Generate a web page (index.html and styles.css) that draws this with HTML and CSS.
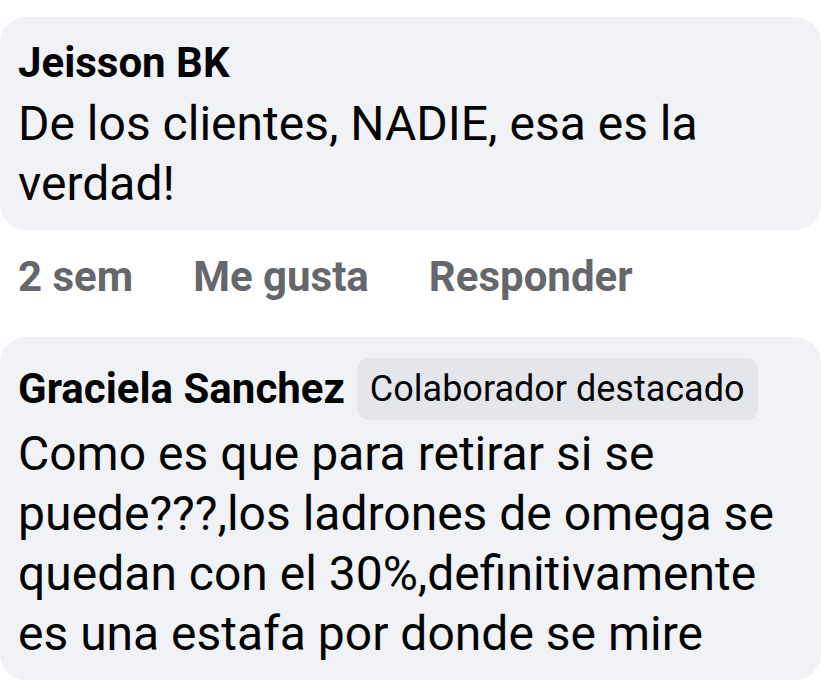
FILE: index.html
```html
<!DOCTYPE html>
<html lang='es'>
<head>
  <title>Comentarios</title>

  <meta charset='utf-8'>
  <meta name='description' content='Comentarios'>

  <link rel="stylesheet" href="styles.css">
</head>
<body>
  <div class='comments'>
    <div class='comment'>
      <div class='bubble'>
        <div class='author_row'>
          <span class='author'>Jeisson BK</span>
        </div>
        <div class='text'>De los clientes, NADIE, esa es la verdad!</div>
      </div>
      <div class='actions'>
        <span class='time'>2 sem</span>
        <span class='action'>Me gusta</span>
        <span class='action'>Responder</span>
      </div>
    </div>

    <div class='comment'>
      <div class='bubble'>
        <div class='author_row'>
          <span class='author'>Graciela Sanchez</span>
          <span class='badge'>Colaborador destacado</span>
        </div>
        <div class='text'>Como es que para retirar si se puede???,los ladrones de omega se quedan con el 30%,definitivamente es una estafa por donde se mire</div>
      </div>
    </div>
  </div>
</body>
</html>
```

FILE: styles.css
```css
*, ::before, ::after {
  box-sizing: border-box;
  margin: 0px; padding: 0px;
}

body {
  background: white;
  font-family: Roboto, 'Noto Sans', sans-serif;
  color: #050505;
  overflow: hidden;
}

.comments {
  display: flex;
  flex-direction: column;
  gap: 35px;
  padding-top: 17px;
}

/* burbuja gris del comentario */
.bubble {
  background: #f0f2f5;
  border-radius: 26px;
  padding: 19px 36px 16px 18px;
}
.comment + .comment .bubble {
  padding-top: 21px;
}
.author_row {
  display: flex;
  align-items: center;
  gap: 12px;
}
.author {
  font-size: 42px; font-weight: 700;
  line-height: 54px;
}
.badge {
  background: #e4e6eb;
  border-radius: 12px;
  padding: 0 13px;
  font-size: 36px;
  line-height: 62px;
}
.text {
  margin-top: 4px;
  font-size: 48px;
  line-height: 60px;
}

/* fila de acciones debajo de la burbuja */
.actions {
  display: flex;
  gap: 60px;
  margin-top: 22px;
  padding-left: 18px;
  color: #65676b;
  font-size: 42px; font-weight: 700;
  line-height: 50px;
}
```
